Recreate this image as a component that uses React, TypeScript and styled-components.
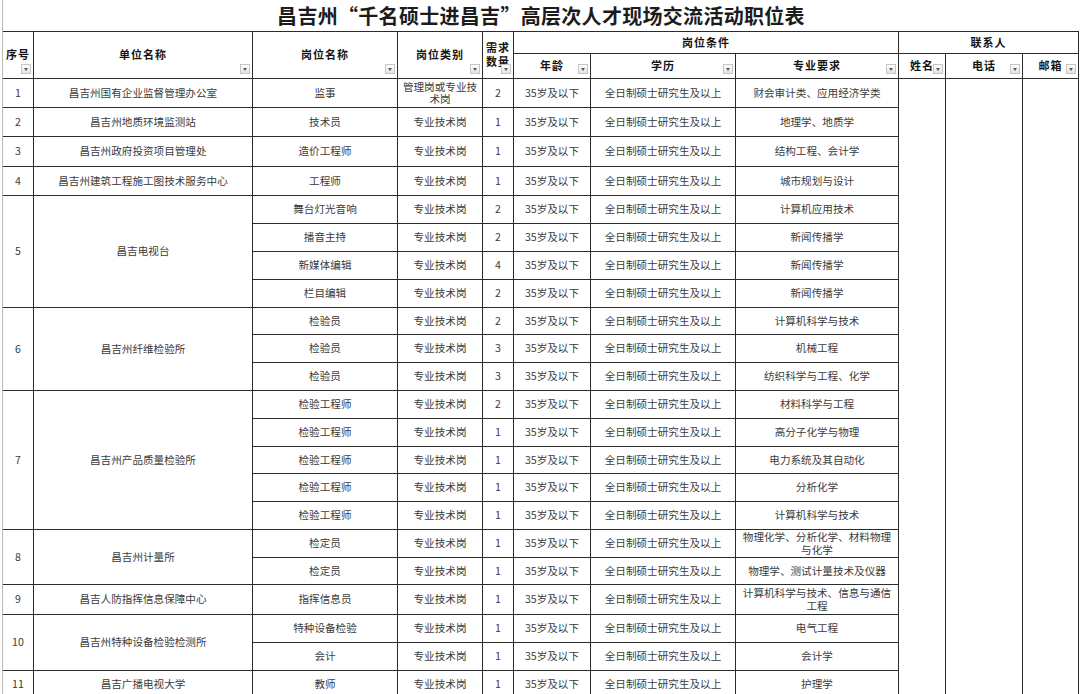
import React from 'react';
import styled, { createGlobalStyle } from 'styled-components';

const Global = createGlobalStyle`
  html, body {
    margin: 0;
    padding: 0;
    background: #ffffff;
    overflow: hidden;
  }
  body {
    font-family: "Noto Sans CJK SC", "Noto Sans", sans-serif;
  }
`;

const Page = styled.div`
  width: 1080px;
  height: 694px;
  overflow: hidden;
  box-sizing: border-box;
  padding-left: 2px;
  background: #ffffff;
`;

const Sheet = styled.div`
  width: 1076px;
  border-left: 1px solid #b9b9b9;
`;

const Title = styled.h1`
  margin: 0;
  height: 31px;
  display: flex;
  align-items: center;
  justify-content: center;
  font-family: "Noto Sans CJK SC", sans-serif;
  font-size: 20px;
  font-weight: 700;
  letter-spacing: 0.3px;
  color: #1c1c1c;
`;

const Grid = styled.div`
  display: grid;
  grid-template-columns: 31px 219px 145px 85px 31px 77px 145px 163px 47px 77px 56px;
  grid-template-rows:
    22px 25px
    29px 29px 30px 29px
    28px 28px 28px 28px
    27px 28px 28px
    28px 28px 27px 28px 28px
    28px 27px
    30px
    28px 28px
    28px;
  border-top: 1px solid #2b2b2b;
`;

const Cell = styled.div<{ $rows?: number; $cols?: number }>`
  grid-row: span ${(p) => p.$rows ?? 1};
  grid-column: span ${(p) => p.$cols ?? 1};
  position: relative;
  box-sizing: border-box;
  border-right: 1px solid #2b2b2b;
  border-bottom: 1px solid #2b2b2b;
  display: flex;
  align-items: center;
  justify-content: center;
  text-align: center;
  padding: 0 3px;
  font-size: 10.6px;
  line-height: 12.5px;
  color: #3b3b3b;
  overflow: hidden;
`;

const HeadCell = styled(Cell)`
  padding: 0 3px 2px;
  font-size: 11px;
  line-height: 14px;
  font-weight: 700;
  letter-spacing: 1px;
  color: #141414;
`;

const Filter = styled.span`
  position: absolute;
  right: 2px;
  bottom: 4px;
  width: 10px;
  height: 10px;
  box-sizing: border-box;
  border: 1px solid #c6c6c6;
  background: linear-gradient(#ffffff, #e4e4e4);
  &::after {
    content: '';
    position: absolute;
    left: 2px;
    top: 3px;
    border-left: 2.5px solid transparent;
    border-right: 2.5px solid transparent;
    border-top: 3px solid #5a5a5a;
  }
`;

type Job = [string, string, string, string];
interface Group {
  no: string;
  unit: string;
  jobs: Job[];
}

const T = '专业技术岗';

const groups: Group[] = [
  { no: '1', unit: '昌吉州国有企业监督管理办公室', jobs: [['监事', '管理岗或专业技术岗', '2', '财会审计类、应用经济学类']] },
  { no: '2', unit: '昌吉州地质环境监测站', jobs: [['技术员', T, '1', '地理学、地质学']] },
  { no: '3', unit: '昌吉州政府投资项目管理处', jobs: [['造价工程师', T, '1', '结构工程、会计学']] },
  { no: '4', unit: '昌吉州建筑工程施工图技术服务中心', jobs: [['工程师', T, '1', '城市规划与设计']] },
  {
    no: '5',
    unit: '昌吉电视台',
    jobs: [
      ['舞台灯光音响', T, '2', '计算机应用技术'],
      ['播音主持', T, '2', '新闻传播学'],
      ['新媒体编辑', T, '4', '新闻传播学'],
      ['栏目编辑', T, '2', '新闻传播学'],
    ],
  },
  {
    no: '6',
    unit: '昌吉州纤维检验所',
    jobs: [
      ['检验员', T, '2', '计算机科学与技术'],
      ['检验员', T, '3', '机械工程'],
      ['检验员', T, '3', '纺织科学与工程、化学'],
    ],
  },
  {
    no: '7',
    unit: '昌吉州产品质量检验所',
    jobs: [
      ['检验工程师', T, '2', '材料科学与工程'],
      ['检验工程师', T, '1', '高分子化学与物理'],
      ['检验工程师', T, '1', '电力系统及其自动化'],
      ['检验工程师', T, '1', '分析化学'],
      ['检验工程师', T, '1', '计算机科学与技术'],
    ],
  },
  {
    no: '8',
    unit: '昌吉州计量所',
    jobs: [
      ['检定员', T, '1', '物理化学、分析化学、材料物理与化学'],
      ['检定员', T, '1', '物理学、测试计量技术及仪器'],
    ],
  },
  { no: '9', unit: '昌吉人防指挥信息保障中心', jobs: [['指挥信息员', T, '1', '计算机科学与技术、信息与通信工程']] },
  {
    no: '10',
    unit: '昌吉州特种设备检验检测所',
    jobs: [
      ['特种设备检验', T, '1', '电气工程'],
      ['会计', T, '1', '会计学'],
    ],
  },
  { no: '11', unit: '昌吉广播电视大学', jobs: [['教师', T, '1', '护理学']] },
];

const totalRows = groups.reduce((n, g) => n + g.jobs.length, 0);

function Head({ label, rows, cols, filter = true }: { label: string; rows?: number; cols?: number; filter?: boolean }) {
  return (
    <HeadCell $rows={rows} $cols={cols}>
      {label}
      {filter && <Filter />}
    </HeadCell>
  );
}

export default function App() {
  const body: React.ReactNode[] = [];
  let first = true;
  groups.forEach((g) => {
    g.jobs.forEach((j, i) => {
      const k = `${g.no}-${i}`;
      if (i === 0) {
        body.push(
          <Cell key={`${k}-no`} $rows={g.jobs.length}>{g.no}</Cell>,
          <Cell key={`${k}-unit`} $rows={g.jobs.length}>{g.unit}</Cell>,
        );
      }
      body.push(
        <Cell key={`${k}-job`}>{j[0]}</Cell>,
        <Cell key={`${k}-type`}>{j[1]}</Cell>,
        <Cell key={`${k}-cnt`}>{j[2]}</Cell>,
        <Cell key={`${k}-age`}>35岁及以下</Cell>,
        <Cell key={`${k}-edu`}>全日制硕士研究生及以上</Cell>,
        <Cell key={`${k}-major`}>{j[3]}</Cell>,
      );
      if (first) {
        body.push(
          <Cell key="c-name" $rows={totalRows} />,
          <Cell key="c-tel" $rows={totalRows} />,
          <Cell key="c-mail" $rows={totalRows} />,
        );
        first = false;
      }
    });
  });

  return (
    <Page>
      <Global />
      <Sheet>
        <Title>昌吉州“千名硕士进昌吉”高层次人才现场交流活动职位表</Title>
        <Grid>
          <Head label="序号" rows={2} />
          <Head label="单位名称" rows={2} />
          <Head label="岗位名称" rows={2} />
          <Head label="岗位类别" rows={2} />
          <Head label="需求数量" rows={2} />
          <Head label="岗位条件" cols={3} filter={false} />
          <Head label="联系人" cols={3} filter={false} />
          <Head label="年龄" />
          <Head label="学历" />
          <Head label="专业要求" />
          <Head label="姓名" />
          <Head label="电话" />
          <Head label="邮箱" />
          {body}
        </Grid>
      </Sheet>
    </Page>
  );
}
